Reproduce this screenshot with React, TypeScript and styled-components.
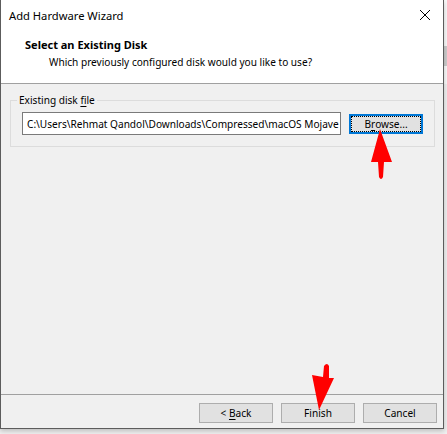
import React from "react";
import styled, { createGlobalStyle } from "styled-components";

const Global = createGlobalStyle`
  html, body { margin: 0; padding: 0; }
  body {
    width: 447px; height: 434px; overflow: hidden;
    background: #f0f0f0;
    font-family: "Noto Sans", "Open Sans", sans-serif;
    font-size: 10.1px; color: #000;
  }
  * { box-sizing: border-box; }
`;

const Desktop = styled.div`
  display: flex;
  align-items: flex-start;
  width: 447px;
  height: 434px;
  background: #f0f0f0;
`;

const Window = styled.div`
  position: relative;
  display: flex;
  flex-direction: column;
  width: 444px;
  height: 429px;
  border: 1px solid #5c5c5c;
  border-top: none;
  background: #f0f0f0;
  box-shadow: 0 2px 5px rgba(0, 0, 0, 0.22);
`;

const RightStrip = styled.div`
  display: flex;
  flex-direction: column;
  width: 3px;
  height: 84px;
  background: #fafafa;
`;

const StripThumb = styled.div`
  margin-top: 46px;
  height: 20px;
  background: #cdcdcd;
`;

const TitleBar = styled.div`
  display: flex;
  align-items: center;
  justify-content: space-between;
  height: 30px;
  padding: 0 10px 0 8px;
  background: #fff;
  font-size: 11.2px;
`;

const CloseBox = styled.div`
  display: flex;
  align-items: center;
  justify-content: center;
  width: 16px;
  height: 16px;
`;

const Header = styled.div`
  display: flex;
  flex-direction: column;
  height: 54px;
  padding: 7px 0 0 24px;
  background: #fff;
  border-bottom: 1px solid #a0a0a0;
`;

const HeaderTitle = styled.div`
  font-weight: 700;
  font-size: 11px;
  line-height: 15px;
`;

const HeaderSub = styled.div`
  margin-top: 3px;
  padding-left: 24px;
  line-height: 15px;
`;

const Body = styled.div`
  flex: 1;
  padding: 9px 8px 0 9px;
  border-bottom: 1px solid #a0a0a0;
`;

const GroupBox = styled.fieldset`
  margin: 0;
  padding: 4px 11px 11px 11px;
  border: 1px solid #dcdcdc;
  display: flex;
  align-items: center;
  gap: 8px;
`;

const Legend = styled.legend`
  margin-left: -5px;
  padding: 0 2px;
  line-height: 15px;
`;

const Access = styled.span`
  text-decoration: underline;
  text-underline-offset: 2px;
`;

const PathField = styled.input`
  width: 319px;
  height: 23px;
  margin: 0;
  padding: 0 0 0 4px;
  border: 1px solid #7a7a7a;
  background: #fff;
  font-family: inherit;
  font-size: 10.1px;
  color: #000;
  outline: none;
`;

const Button = styled.button<{ $focused?: boolean }>`
  position: relative;
  width: 74px;
  height: 20px;
  margin: 0;
  padding: 0;
  border: ${(p) => (p.$focused ? "2px solid #0078d7" : "1px solid #adadad")};
  background: #e1e1e1;
  font-family: inherit;
  font-size: 10.1px;
  color: #000;
  line-height: 16px;
`;

const FocusRect = styled.span`
  display: flex;
  align-items: center;
  justify-content: center;
  height: 100%;
  border: 1px dotted #000;
`;

const Footer = styled.div`
  display: flex;
  justify-content: flex-end;
  gap: 8px;
  height: 33px;
  padding: 8px 6px 0 0;
`;

const Overlay = styled.svg`
  position: absolute;
  left: -1px;
  top: 0;
  pointer-events: none;
`;

export default function App() {
  return (
    <>
      <Global />
      <Desktop>
        <Window>
          <TitleBar>
            <span>Add Hardware Wizard</span>
            <CloseBox>
              <svg width="12" height="12" viewBox="0 0 12 12">
                <path d="M1 1 L11 11 M11 1 L1 11" stroke="#000" strokeWidth="1" />
              </svg>
            </CloseBox>
          </TitleBar>
          <Header>
            <HeaderTitle>Select an Existing Disk</HeaderTitle>
            <HeaderSub>Which previously configured disk would you like to use?</HeaderSub>
          </Header>
          <Body>
            <GroupBox>
              <Legend>
                Existing disk <Access>f</Access>ile
              </Legend>
              <PathField
                readOnly
                value={"C:\\Users\\Rehmat Qandol\\Downloads\\Compressed\\macOS Mojave 10.14\\macOS Mojave.vmdk"}
              />
              <Button $focused>
                <FocusRect>
                  B<Access>r</Access>owse...
                </FocusRect>
              </Button>
            </GroupBox>
          </Body>
          <Footer>
            <Button>
              &lt; <Access>B</Access>ack
            </Button>
            <Button>Finish</Button>
            <Button>Cancel</Button>
          </Footer>
          <Overlay width="447" height="434" viewBox="0 0 447 434">
            <path
              d="M380 129 L371 162 L378 162 L379 177 Q381 181 383 177 L384 162 L392 162 Z"
              fill="#ff0000"
            />
            <path
              d="M319 410 L312 375 L323 377 L324 366 Q327 362 329 366 L329 378 L334 378 Z"
              fill="#ff0000"
            />
          </Overlay>
        </Window>
        <RightStrip>
          <StripThumb />
        </RightStrip>
      </Desktop>
    </>
  );
}
